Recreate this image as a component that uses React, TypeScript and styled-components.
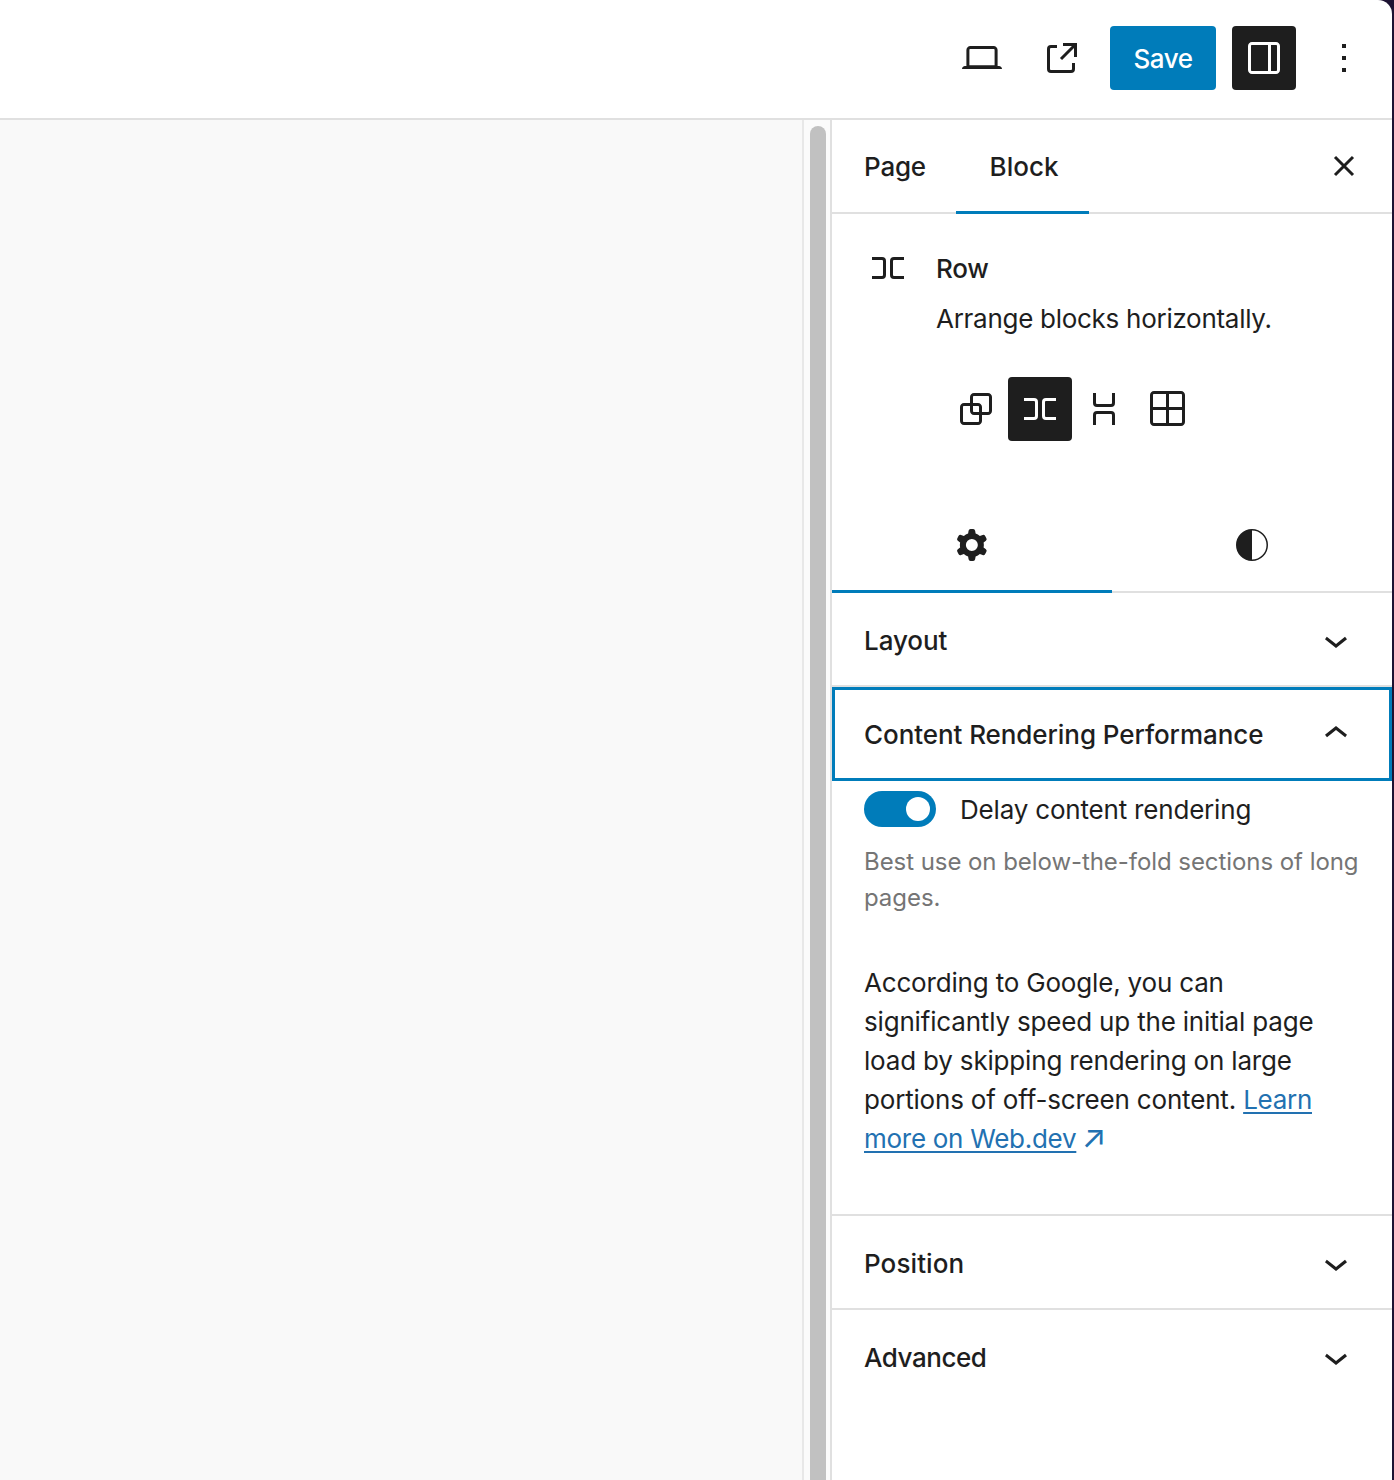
import React from "react";
import styled, { createGlobalStyle } from "styled-components";

const Global = createGlobalStyle`
  html, body { margin: 0; padding: 0; background: #1d1232; }
  * { box-sizing: border-box; }
  #root { width: 1394px; height: 1480px; overflow: hidden; }
`;

const Shell = styled.div`
  width: 1392px;
  height: 1480px;
  background: #fff;
  border-top-right-radius: 14px;
  overflow: hidden;
  display: flex;
  flex-direction: column;
  font-family: Inter, "Liberation Sans", sans-serif;
  color: #1e1e1e;
  font-size: 26px;
`;

const TopBar = styled.header`
  flex: 0 0 120px;
  border-bottom: 2px solid #e0e0e0;
  display: flex;
  align-items: center;
  justify-content: flex-end;
  padding: 0 24px 2px 0;
`;

const IconButton = styled.button<{ $active?: boolean; $gap?: number }>`
  width: ${(p) => (p.$active ? 64 : 48)}px;
  height: ${(p) => (p.$active ? 64 : 48)}px;
  margin-left: ${(p) => p.$gap ?? 0}px;
  padding: 0;
  border: 0;
  border-radius: 4px;
  background: ${(p) => (p.$active ? "#1e1e1e" : "transparent")};
  color: ${(p) => (p.$active ? "#fff" : "#1e1e1e")};
  display: flex;
  align-items: center;
  justify-content: center;
  flex: none;
`;

const SaveButton = styled.button`
  width: 106px;
  height: 64px;
  margin-left: 24px;
  border: 0;
  border-radius: 4px;
  background: #007cba;
  color: #fff;
  font: 500 26px Inter, "Liberation Sans", sans-serif;
  letter-spacing: -0.5px;
`;

const Body = styled.div`
  flex: 1;
  display: flex;
  min-height: 0;
`;

const Canvas = styled.main`
  width: 804px;
  background: #f9f9f9;
  border-right: 2px solid #e8e8e8;
  flex: none;
`;

const ScrollTrack = styled.div`
  width: 28px;
  flex: none;
  background: #fbfbfb;
  border-right: 2px solid #e0e0e0;
  padding: 6px 4px 0 6px;
`;

const ScrollThumb = styled.div`
  width: 16px;
  height: 100%;
  background: #c1c1c1;
  border-radius: 8px 8px 0 0;
`;

const Sidebar = styled.aside`
  flex: 1;
  min-width: 0;
  display: flex;
  flex-direction: column;
`;

const SidebarTabs = styled.div`
  flex: 0 0 94px;
  border-bottom: 2px solid #e0e0e0;
  display: flex;
  align-items: stretch;
  padding-right: 24px;
`;

const SidebarTab = styled.div<{ $width: number; $active?: boolean }>`
  width: ${(p) => p.$width}px;
  margin-bottom: -2px;
  display: flex;
  align-items: center;
  justify-content: center;
  font-weight: 500;
  letter-spacing: ${(p) => (p.$active ? "0" : "-0.2px")};
  padding-left: ${(p) => (p.$active ? 3 : 2)}px;
  padding-bottom: 1px;
  box-shadow: ${(p) => (p.$active ? "inset 0 -3px 0 #007cba" : "none")};
`;

const CloseSlot = styled.div`
  margin-left: auto;
  display: flex;
  align-items: center;
`;

const BlockCard = styled.section`
  padding: 30px 32px 0;
  display: grid;
  grid-template-columns: 48px 1fr;
  column-gap: 24px;
  height: 283px;
  align-content: start;
`;

const BlockIconSlot = styled.div`
  width: 48px;
  height: 48px;
  color: #1e1e1e;
`;

const BlockTitle = styled.div`
  height: 48px;
  display: flex;
  align-items: center;
  font-weight: 500;
  letter-spacing: -0.2px;
  padding-top: 1px;
`;

const BlockDescription = styled.div`
  grid-column: 2;
  margin-top: 9px;
  line-height: 36px;
  letter-spacing: -0.28px;
`;

const Variations = styled.div`
  grid-column: 2;
  margin: 40px 0 0 8px;
  display: flex;
`;

const VariationButton = styled.div<{ $active?: boolean }>`
  width: 64px;
  height: 64px;
  border-radius: 4px;
  background: ${(p) => (p.$active ? "#1e1e1e" : "transparent")};
  color: ${(p) => (p.$active ? "#fff" : "#1e1e1e")};
  display: flex;
  align-items: center;
  justify-content: center;
`;

const InspectorTabs = styled.div`
  flex: 0 0 96px;
  border-bottom: 2px solid #e0e0e0;
  display: flex;
`;

const InspectorTab = styled.div<{ $active?: boolean }>`
  flex: 1;
  margin-bottom: -2px;
  display: flex;
  align-items: center;
  justify-content: center;
  box-shadow: ${(p) => (p.$active ? "inset 0 -3px 0 #007cba" : "none")};
`;

const PanelHeader = styled.div<{ $focused?: boolean; $border?: boolean; $tracking?: number }>`
  height: ${(p) => (p.$focused ? 94 : p.$border === false ? 92 : 94)}px;
  flex: none;
  display: flex;
  align-items: center;
  justify-content: space-between;
  padding: ${(p) => (p.$focused ? "0 32px" : "2px 32px 0")};
  font-weight: 500;
  letter-spacing: ${(p) => p.$tracking ?? -0.07}px;
  border-bottom: ${(p) => (p.$border === false ? "0" : "2px solid #e0e0e0")};
  ${(p) => (p.$focused ? "border: 0; box-shadow: inset 0 0 0 3px #007cba;" : "")}
`;

const PanelContent = styled.div`
  padding: 10px 32px 56px;
  border-bottom: 2px solid #e0e0e0;
  flex: none;
`;

const ToggleRow = styled.div`
  display: flex;
  align-items: center;
  gap: 24px;
  height: 36px;
  letter-spacing: -0.19px;
`;

const ToggleTrack = styled.div`
  width: 72px;
  height: 36px;
  border-radius: 18px;
  background: #007cba;
  display: flex;
  align-items: center;
  justify-content: flex-end;
  padding-right: 6px;
`;

const ToggleThumb = styled.div`
  width: 24px;
  height: 24px;
  border-radius: 50%;
  background: #fff;
`;

const HelpText = styled.p`
  margin: 17px 0 0;
  font-size: 24px;
  line-height: 36px;
  color: #757575;
  letter-spacing: -0.06px;
`;

const BodyText = styled.p`
  margin: 47px 0 0;
  line-height: 39px;
  letter-spacing: -0.18px;
`;

const DocLink = styled.a`
  color: #2271b1;
  text-decoration: underline;
  text-underline-offset: 3px;
  letter-spacing: -0.28px;
`;

const LinkArrow = styled.span`
  color: #2271b1;
  font-size: 32px;
  line-height: 0;
  margin-left: -2px;
`;

const ChevronSlot = styled.span<{ $up?: boolean }>`
  display: flex;
  color: #1e1e1e;
`;

const Svg = ({ size = 48, children }: { size?: number; children: React.ReactNode }) => (
  <svg width={size} height={size} viewBox="0 0 24 24" fill="currentColor" aria-hidden="true">
    {children}
  </svg>
);

const RowIcon = () => (
  <Svg>
    <path d="M4 6.5h5a2 2 0 0 1 2 2v7a2 2 0 0 1-2 2H4V16h5a.5.5 0 0 0 .5-.5v-7A.5.5 0 0 0 9 8H4V6.5Zm16 0h-5a2 2 0 0 0-2 2v7a2 2 0 0 0 2 2h5V16h-5a.5.5 0 0 1-.5-.5v-7A.5.5 0 0 1 15 8h5V6.5Z" />
  </Svg>
);
const StackIcon = () => (
  <Svg>
    <path d="M17.5 4v5a2 2 0 0 1-2 2h-7a2 2 0 0 1-2-2V4H8v5a.5.5 0 0 0 .5.5h7a.5.5 0 0 0 .5-.5V4h1.5Zm0 16v-5a2 2 0 0 0-2-2h-7a2 2 0 0 0-2 2v5H8v-5a.5.5 0 0 1 .5-.5h7a.5.5 0 0 1 .5.5v5h1.5Z" />
  </Svg>
);
const GroupIcon = () => (
  <Svg>
    <path d="M18 4h-7c-1.1 0-2 .9-2 2v3H6c-1.1 0-2 .9-2 2v7c0 1.1.9 2 2 2h7c1.1 0 2-.9 2-2v-3h3c1.1 0 2-.9 2-2V6c0-1.1-.9-2-2-2zm-4.5 14c0 .3-.2.5-.5.5H6c-.3 0-.5-.2-.5-.5v-7c0-.3.2-.5.5-.5h3V13c0 1.1.9 2 2 2h2.5v3zm0-4.5H11c-.3 0-.5-.2-.5-.5v-2.5H13c.3 0 .5.2.5.5v2.5zm5-.5c0 .3-.2.5-.5.5h-3V11c0-1.1-.9-2-2-2h-2.5V6c0-.3.2-.5.5-.5h7c.3 0 .5.2.5.5v7z" />
  </Svg>
);
const GridIcon = () => (
  <Svg>
    <path fillRule="evenodd" clipRule="evenodd" d="m3 5c0-1.10457.89543-2 2-2h13.5c1.1046 0 2 .89543 2 2v13.5c0 1.1046-.8954 2-2 2h-13.5c-1.10457 0-2-.8954-2-2zm2-.5h6v6.5h-6.5v-6c0-.27614.22386-.5.5-.5zm-.5 8v6c0 .2761.22386.5.5.5h6v-6.5zm8 0v6.5h6c.2761 0 .5-.2239.5-.5v-6zm0-8v6.5h6.5v-6c0-.27614-.2239-.5-.5-.5z" />
  </Svg>
);
const CogIcon = () => (
  <Svg>
    <path fillRule="evenodd" clipRule="evenodd" d="M10.289 4.836A1 1 0 0111.275 4h1.306a1 1 0 01.987.836l.244 1.466c.787.26 1.503.679 2.108 1.218l1.393-.522a1 1 0 011.216.437l.653 1.13a1 1 0 01-.23 1.273l-1.148.944a6.025 6.025 0 010 2.435l1.149.946a1 1 0 01.23 1.272l-.653 1.13a1 1 0 01-1.216.437l-1.394-.522c-.605.54-1.32.958-2.108 1.218l-.244 1.466a1 1 0 01-.987.836h-1.306a1 1 0 01-.986-.836l-.244-1.466a5.995 5.995 0 01-2.108-1.218l-1.394.522a1 1 0 01-1.217-.436l-.653-1.131a1 1 0 01.23-1.272l1.149-.946a6.026 6.026 0 010-2.435l-1.148-.944a1 1 0 01-.23-1.272l.653-1.131a1 1 0 011.217-.437l1.393.522a5.994 5.994 0 012.108-1.218l.244-1.466zM14.929 12a3 3 0 11-6 0 3 3 0 016 0z" />
  </Svg>
);
const StylesIcon = () => (
  <Svg>
    <path fillRule="evenodd" clipRule="evenodd" d="M12 4a8 8 0 1 0 0 16 8 8 0 0 0 0-16Zm0 15.25V4.75a7.25 7.25 0 0 1 0 14.5Z" />
  </Svg>
);
const LaptopIcon = () => (
  <Svg>
    <path d="M20.5 16h-.7V8c0-1.1-.9-2-2-2H6.2c-1.1 0-2 .9-2 2v8h-.7c-.8 0-1.5.7-1.5 1.5h20c0-.8-.7-1.5-1.5-1.5zM5.7 8c0-.3.2-.5.5-.5h11.6c.3 0 .5.2.5.5v7.6H5.7V8z" />
  </Svg>
);
const ExternalIcon = () => (
  <Svg>
    <path d="M19.5 4.5h-7V6h4.44l-5.97 5.97 1.06 1.06L18 7.06v4.44h1.5v-7Zm-13 1a2 2 0 0 0-2 2v10a2 2 0 0 0 2 2h10a2 2 0 0 0 2-2v-3H17v3a.5.5 0 0 1-.5.5h-10a.5.5 0 0 1-.5-.5v-10a.5.5 0 0 1 .5-.5h3V5.5h-3Z" />
  </Svg>
);
const DrawerIcon = () => (
  <Svg>
    <path fillRule="evenodd" clipRule="evenodd" d="M18 4H6c-1.1 0-2 .9-2 2v12c0 1.1.9 2 2 2h12c1.1 0 2-.9 2-2V6c0-1.1-.9-2-2-2zm-4 14.5H6c-.3 0-.5-.2-.5-.5V6c0-.3.2-.5.5-.5h8v13zm4.5-.5c0 .3-.2.5-.5.5h-2.5v-13H18c.3 0 .5.2.5.5v12z" />
  </Svg>
);
const MoreIcon = () => (
  <Svg>
    <path d="M13 19h-2v-2h2v2zm0-6h-2v-2h2v2zm0-6h-2V5h2v2z" />
  </Svg>
);
const CloseIcon = () => (
  <svg width={48} height={48} viewBox="0 0 48 48" fill="none" stroke="currentColor" strokeWidth={3} aria-hidden="true">
    <path d="M15 15 33 33M33 15 15 33" />
  </svg>
);
const ChevronDown = () => (
  <ChevronSlot>
    <Svg>
      <path d="M17.5 11.6L12 16l-5.5-4.4.9-1.2L12 14l4.5-3.6 1 1.2z" />
    </Svg>
  </ChevronSlot>
);
const ChevronUp = () => (
  <ChevronSlot $up>
    <Svg>
      <path d="M6.5 12.4L12 8l5.5 4.4-.9 1.2L12 10l-4.5 3.6-1-1.2z" />
    </Svg>
  </ChevronSlot>
);

export default function App() {
  return (
    <>
      <Global />
      <Shell>
        <TopBar>
          <IconButton><LaptopIcon /></IconButton>
          <IconButton $gap={32}><ExternalIcon /></IconButton>
          <SaveButton>Save</SaveButton>
          <IconButton $active $gap={16}><DrawerIcon /></IconButton>
          <IconButton $gap={24}><MoreIcon /></IconButton>
        </TopBar>
        <Body>
          <Canvas />
          <ScrollTrack><ScrollThumb /></ScrollTrack>
          <Sidebar>
            <SidebarTabs>
              <SidebarTab $width={124}>Page</SidebarTab>
              <SidebarTab $width={133} $active>Block</SidebarTab>
              <CloseSlot><IconButton><CloseIcon /></IconButton></CloseSlot>
            </SidebarTabs>
            <BlockCard>
              <BlockIconSlot><RowIcon /></BlockIconSlot>
              <BlockTitle>Row</BlockTitle>
              <BlockDescription>Arrange blocks horizontally.</BlockDescription>
              <Variations>
                <VariationButton><GroupIcon /></VariationButton>
                <VariationButton $active><RowIcon /></VariationButton>
                <VariationButton><StackIcon /></VariationButton>
                <VariationButton><GridIcon /></VariationButton>
              </Variations>
            </BlockCard>
            <InspectorTabs>
              <InspectorTab $active><CogIcon /></InspectorTab>
              <InspectorTab><StylesIcon /></InspectorTab>
            </InspectorTabs>
            <PanelHeader>Layout<ChevronDown /></PanelHeader>
            <PanelHeader $focused>Content Rendering Performance<ChevronUp /></PanelHeader>
            <PanelContent>
              <ToggleRow>
                <ToggleTrack><ToggleThumb /></ToggleTrack>
                Delay content rendering
              </ToggleRow>
              <HelpText>Best use on below-the-fold sections of long pages.</HelpText>
              <BodyText>
                According to Google, you can significantly speed up the initial page load by skipping rendering on large portions of off-screen content.{" "}
                <DocLink href="#">Learn more on Web.dev</DocLink>{" "}
                <LinkArrow>↗</LinkArrow>
              </BodyText>
            </PanelContent>
            <PanelHeader $tracking={0.1}>Position<ChevronDown /></PanelHeader>
            <PanelHeader $border={false} $tracking={-0.45}>Advanced<ChevronDown /></PanelHeader>
          </Sidebar>
        </Body>
      </Shell>
    </>
  );
}
